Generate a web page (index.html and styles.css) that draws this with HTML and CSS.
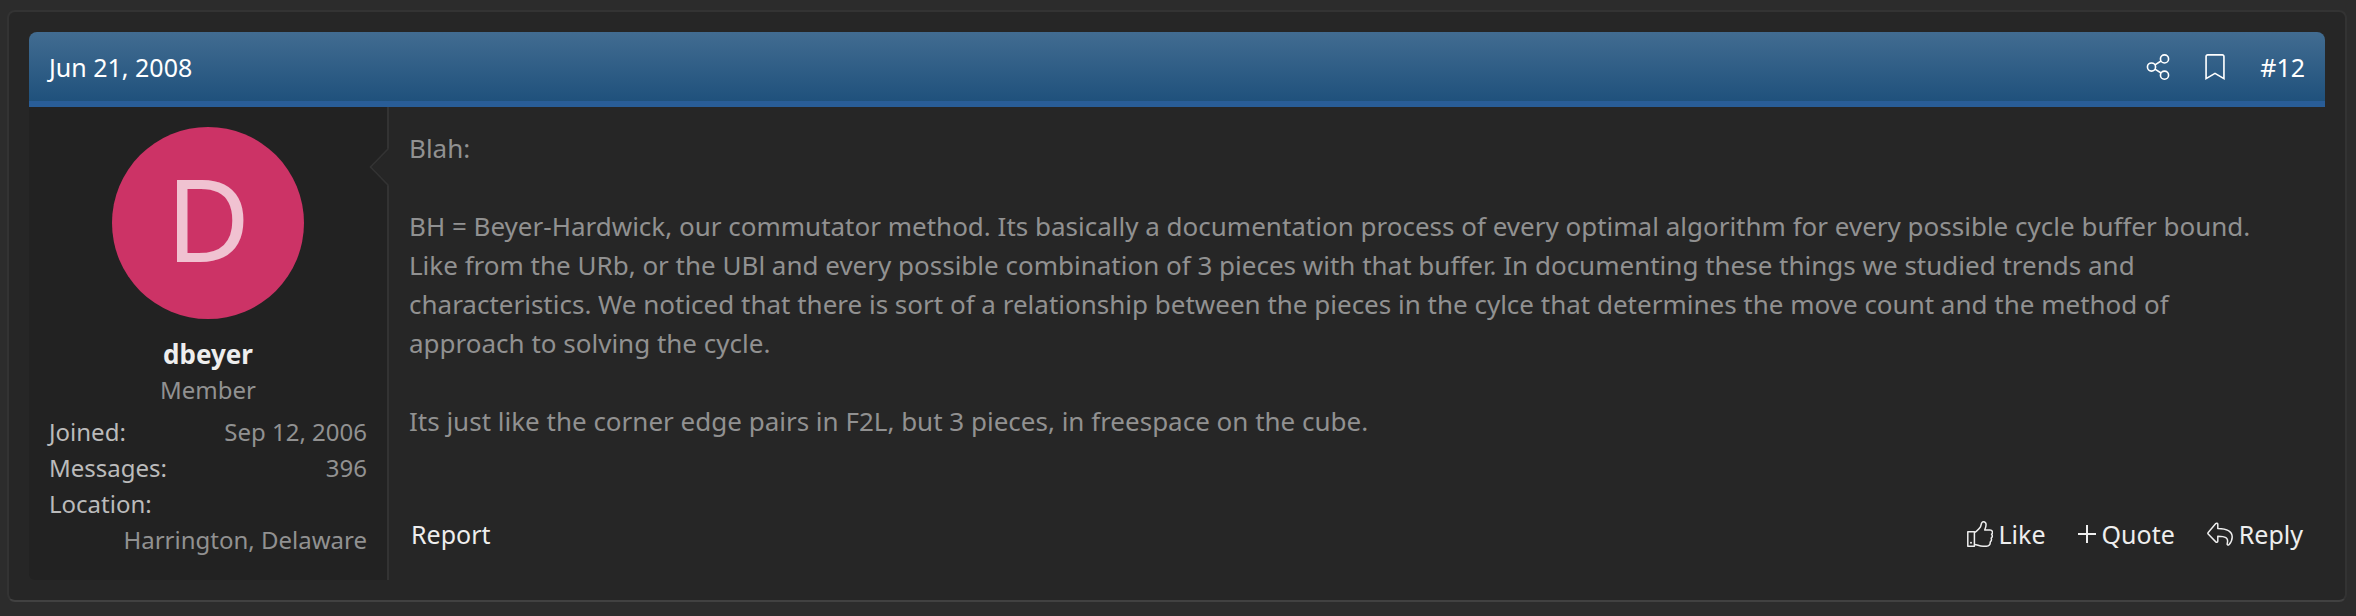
FILE: index.html
```html
<!DOCTYPE html>
<html lang="en">
<head>
<meta charset="utf-8">
<title>Post #12</title>
<link rel="stylesheet" href="styles.css">
</head>
<body>
<article class="block">
  <div class="message">
    <header class="message-header">
      <a class="header-link" href="#post-12"><time datetime="2008-06-21">Jun 21, 2008</time></a>
      <nav class="header-tools" aria-label="Post tools">
        <a class="header-link icon-link" href="#share" aria-label="Share">
          <svg class="icon-share" viewBox="0 0 448 512" fill="none" stroke="currentColor" stroke-width="32"><circle cx="352" cy="96" r="80"/><circle cx="96" cy="256" r="80"/><circle cx="352" cy="416" r="80"/><path d="M164 214l120-75M164 298l120 75"/></svg>
        </a>
        <a class="header-link icon-link" href="#bookmark" aria-label="Add bookmark">
          <svg class="icon-bookmark" viewBox="0 0 384 512" fill="currentColor"><path d="M336 0H48C21.490 0 0 21.490 0 48v464l192-112 192 112V48c0-26.510-21.490-48-48-48zm16 456.287l-160-93.333-160 93.333V48c0-8.822 7.178-16 16-16h288c8.822 0 16 7.178 16 16v408.287z"/></svg>
        </a>
        <a class="header-link" href="#post-12">#12</a>
      </nav>
    </header>
    <div class="message-inner">
      <section class="message-user">
        <a class="avatar" href="#dbeyer" aria-label="dbeyer's profile"><span>D</span></a>
        <h4 class="user-name"><a href="#dbeyer">dbeyer</a></h4>
        <p class="user-title">Member</p>
        <dl class="user-extras">
          <div class="pair"><dt>Joined:</dt><dd>Sep 12, 2006</dd></div>
          <div class="pair"><dt>Messages:</dt><dd>396</dd></div>
          <div class="pair pair-stacked"><dt>Location:</dt><dd>Harrington, Delaware</dd></div>
        </dl>
        <svg class="user-arrow" viewBox="0 0 20 38"><path d="M20 0V38L18 37L1 19L18 1Z" fill="#262626"/><path d="M19 0V1L1.500 19L19 37V38" fill="none" stroke="#333" stroke-width="1.600"/></svg>
      </section>
      <section class="message-main">
        <div class="message-body">
          <p>Blah:</p>
          <p>BH = Beyer-Hardwick, our commutator method. Its basically a documentation process of every optimal algorithm for every possible cycle buffer bound. Like from the URb, or the UBl and every possible combination of 3 pieces with that buffer. In documenting these things we studied trends and characteristics. We noticed that there is sort of a relationship between the pieces in the cylce that determines the move count and the method of approach to solving the cycle.</p>
          <p>Its just like the corner edge pairs in F2L, but 3 pieces, in freespace on the cube.</p>
        </div>
        <footer class="message-actions">
          <a class="action" href="#report">Report</a>
          <div class="action-set">
            <a class="action" href="#like">
              <svg class="icon" viewBox="0 0 26 26" fill="none" stroke="currentColor" stroke-width="1.500" stroke-linejoin="round"><path d="M.8 10.800H7.400V25.200H.8Z"/><circle cx="4" cy="21.800" r="1" fill="currentColor" stroke="none"/><path d="M7.400 11.500C10 10.500 11.400 8.300 13 6.600C14.500 5 13.700.8 16.300.8C20.500.8 19 6 17.700 9H23C26 9 26 12.200 24.600 13.200C25.600 14.500 25.300 16.300 24.200 17.200C24.800 18.700 24.200 20.200 23.200 21C23.500 23.500 22 25.200 19.500 25.200H16C12 25.200 10.500 23.700 7.400 23.600"/></svg>
              <span>Like</span>
            </a>
            <a class="action" href="#quote">
              <svg class="icon icon-plus" viewBox="0 0 18 26" fill="none" stroke="currentColor" stroke-width="2"><path d="M0 13H18M9 4V22"/></svg>
              <span>Quote</span>
            </a>
            <a class="action" href="#reply">
              <svg class="icon" viewBox="0 0 26 26" fill="none" stroke="currentColor" stroke-width="1.500" stroke-linejoin="round"><path d="M1.200 11.500L8.800 2.600C9.500 1.900 10.800 2.200 10.800 3.200V7.400C18 7.500 25.200 9 25.200 16C25.200 19.500 23.600 22 21.900 23.700C21 24.500 19.900 23.900 20.200 22.700C22 16.500 18 15.300 10.800 15.200V20.300C10.800 21.300 9.500 21.600 8.800 20.900L1.200 13C.7 12.500 .7 12 1.200 11.500Z"/></svg>
              <span>Reply</span>
            </a>
          </div>
        </footer>
      </section>
    </div>
  </div>
</article>
</body>
</html>
```
FILE: styles.css
```css
* { box-sizing: border-box; }

body {
  margin: 0;
  padding: 10px 9px 12px 7px;
  background: #2c2c2c;
  color: #919191;
  font-family: "Segoe UI", "Noto Sans", "Open Sans", sans-serif;
  font-size: 25px;
  line-height: 36px;
}

a { color: inherit; text-decoration: none; }
p, h4, dl, dd { margin: 0; }

.block {
  padding: 20px;
  background: #262626;
  border: 2px solid #333;
  border-bottom-color: #414141;
  border-radius: 8px;
}

.message-header {
  display: flex;
  justify-content: space-between;
  align-items: center;
  padding: 17px 20px 16px;
  color: #fff;
  background: linear-gradient(#426c91, #1f517c);
  background-clip: padding-box;
  border-bottom: 6px solid #295d97;
  border-radius: 8px 8px 0 0;
}

.header-tools { display: flex; align-items: center; gap: 35px; }
.icon-link { display: flex; }
.icon-share { width: 24px; height: 26px; }
.icon-bookmark { width: 20px; height: 26px; }

.message-inner { display: flex; }

.message-user {
  position: relative;
  flex: 0 0 360px;
  padding: 20px 20px 22px;
  background: #222;
  border-right: 2px solid #333;
  border-radius: 0 0 0 6px;
  font-size: 24px;
}

.user-arrow {
  position: absolute;
  top: 41px;
  right: -2px;
  width: 20px;
  height: 38px;
}

.avatar {
  display: flex;
  align-items: center;
  justify-content: center;
  width: 192px;
  height: 192px;
  margin: 0 auto;
  padding-bottom: 12px;
  border-radius: 50%;
  background: #cc3366;
  color: #f0c2d1;
  font-size: 116px;
  line-height: 180px;
}

.user-name {
  margin-top: 17px;
  color: #eee;
  font-size: 26px;
  font-weight: 700;
  text-align: center;
}

.user-title { text-align: center; }
.user-extras { margin-top: 6px; }

.pair { display: flex; justify-content: space-between; }
.pair-stacked { flex-direction: column; }
.pair dt { color: #bbb; }
.pair dd { text-align: right; }

.message-main {
  flex: 1;
  display: flex;
  flex-direction: column;
  min-width: 0;
  padding: 22px 20px 20px;
}

.message-body {
  display: flex;
  flex-direction: column;
  gap: 39px;
  flex: 1;
  padding-right: 20px;
  font-size: 26px;
  line-height: 39px;
}

.message-actions {
  display: flex;
  justify-content: space-between;
  margin-top: 50px;
  padding: 8px 2px;
  color: #eee;
}

.action-set { display: flex; gap: 32px; }
.action { display: flex; align-items: center; gap: 6px; }
.icon { width: 26px; height: 26px; }
.icon-plus { width: 18px; }
```
